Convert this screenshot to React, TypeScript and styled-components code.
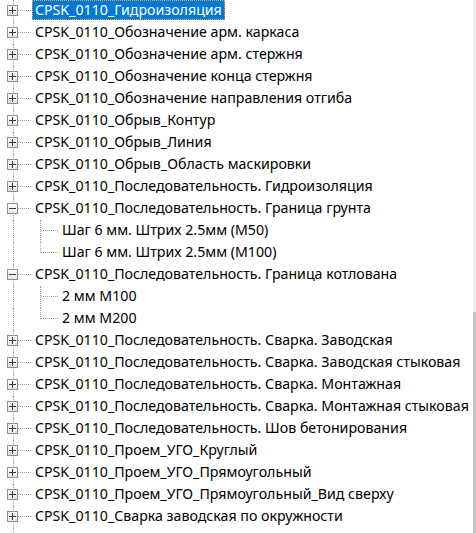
import styled, { createGlobalStyle } from "styled-components";

type Node = { label: string; children?: string[] };

const nodes: Node[] = [
  { label: "CPSK_0110_Гидроизоляция" },
  { label: "CPSK_0110_Обозначение арм. каркаса" },
  { label: "CPSK_0110_Обозначение арм. стержня" },
  { label: "CPSK_0110_Обозначение конца стержня" },
  { label: "CPSK_0110_Обозначение направления отгиба" },
  { label: "CPSK_0110_Обрыв_Контур" },
  { label: "CPSK_0110_Обрыв_Линия" },
  { label: "CPSK_0110_Обрыв_Область маскировки" },
  { label: "CPSK_0110_Последовательность. Гидроизоляция" },
  {
    label: "CPSK_0110_Последовательность. Граница грунта",
    children: ["Шаг 6 мм. Штрих 2.5мм (М50)", "Шаг 6 мм. Штрих 2.5мм (М100)"],
  },
  {
    label: "CPSK_0110_Последовательность. Граница котлована",
    children: ["2 мм М100", "2 мм М200"],
  },
  { label: "CPSK_0110_Последовательность. Сварка. Заводская" },
  { label: "CPSK_0110_Последовательность. Сварка. Заводская стыковая" },
  { label: "CPSK_0110_Последовательность. Сварка. Монтажная" },
  { label: "CPSK_0110_Последовательность. Сварка. Монтажная стыковая" },
  { label: "CPSK_0110_Последовательность. Шов бетонирования" },
  { label: "CPSK_0110_Проем_УГО_Круглый" },
  { label: "CPSK_0110_Проем_УГО_Прямоугольный" },
  { label: "CPSK_0110_Проем_УГО_Прямоугольный_Вид сверху" },
  { label: "CPSK_0110_Сварка заводская по окружности" },
];

export default function App() {
  return (
    <>
      <GlobalStyle />
      <Page>
        <Tree>
          {nodes.map((node, i) => (
            <div key={node.label}>
              <Row>
                <Cell $width={32} $vline="full" $hline>
                  <Expander>{node.children ? <Minus /> : <Plus />}</Expander>
                </Cell>
                <Label $selected={i === 0}>{node.label}</Label>
              </Row>
              {node.children?.map((child, j) => (
                <Row key={child}>
                  <Cell $width={27} $vline="full" />
                  <Cell
                    $width={32}
                    $vline={j === node.children!.length - 1 ? "top" : "full"}
                    $hline
                  />
                  <Label>{child}</Label>
                </Row>
              ))}
            </div>
          ))}
          <Tail>
            <Cell $width={27} $vline="full" />
          </Tail>
        </Tree>
        <ScrollBar>
          <Track />
          <Thumb />
        </ScrollBar>
      </Page>
    </>
  );
}

const GlobalStyle = createGlobalStyle`
  html, body {
    margin: 0;
    padding: 0;
    background: #ffffff;
  }
  body {
    font-family: "Noto Sans", "Open Sans", sans-serif;
    font-size: 14.2px;
    color: #000000;
  }
`;

const Page = styled.div`
  display: flex;
  width: 476px;
  height: 533px;
  overflow: hidden;
`;

const Tree = styled.div`
  flex: 1;
  display: flex;
  flex-direction: column;
  padding-right: 3px;
  overflow: hidden;
`;

const Row = styled.div`
  display: flex;
  height: 22px;
  white-space: nowrap;
`;

const Tail = styled.div`
  display: flex;
  flex: 1;
`;

const Cell = styled.div<{ $width: number; $vline?: "full" | "top"; $hline?: boolean }>`
  position: relative;
  flex: 0 0 ${(p) => p.$width}px;
  height: 100%;

  &::before {
    content: "";
    display: ${(p) => (p.$vline ? "block" : "none")};
    position: absolute;
    left: 13px;
    top: 0;
    height: ${(p) => (p.$vline === "top" ? "11px" : "100%")};
    border-left: 1px dotted #a0a0a0;
  }

  &::after {
    content: "";
    display: ${(p) => (p.$hline ? "block" : "none")};
    position: absolute;
    left: 14px;
    top: 10px;
    width: 17px;
    border-top: 1px dotted #a0a0a0;
  }
`;

const Expander = styled.div`
  position: absolute;
  z-index: 1;
  left: 7px;
  top: 5px;
  width: 11px;
  height: 11px;
  box-sizing: border-box;
  border: 1px solid #8f8f8f;
  background: linear-gradient(#ffffff, #e6e6e6);
  display: flex;
  align-items: center;
  justify-content: center;
`;

const Minus = styled.span`
  position: relative;
  width: 7px;
  height: 1px;
  background: #223a6a;
`;

const Plus = styled(Minus)`
  &::after {
    content: "";
    position: absolute;
    left: 3px;
    top: -3px;
    width: 1px;
    height: 7px;
    background: #223a6a;
  }
`;

const Label = styled.span<{ $selected?: boolean }>`
  height: 20px;
  line-height: 20px;
  padding: 0 3px;
  box-sizing: border-box;
  background: ${(p) => (p.$selected ? "#0078d7" : "transparent")};
  color: ${(p) => (p.$selected ? "#ffffff" : "#000000")};
  outline: ${(p) => (p.$selected ? "1px dotted #f5a623" : "none")};
  outline-offset: -1px;
`;

const ScrollBar = styled.div`
  flex: 0 0 3px;
  display: flex;
  flex-direction: column;
`;

const Track = styled.div`
  flex: 0 0 312px;
  background: #f0f0f0;
`;

const Thumb = styled.div`
  flex: 1;
  background: #c2c2c2;
`;
